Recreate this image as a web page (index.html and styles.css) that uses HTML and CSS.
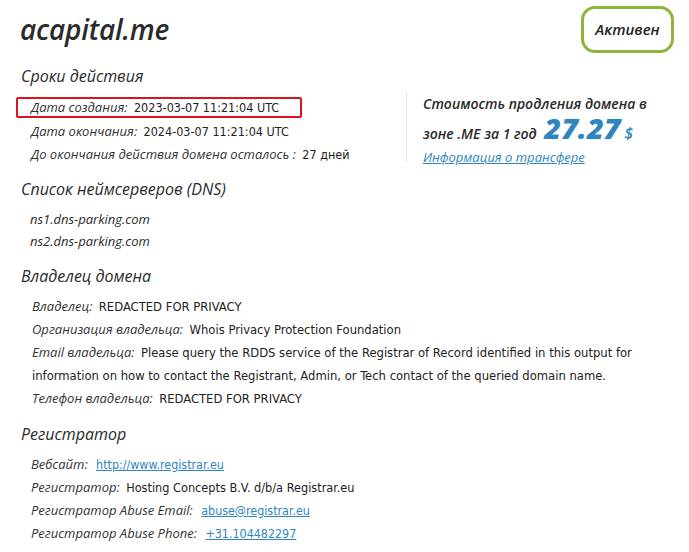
FILE: index.html
```html
<!DOCTYPE html>
<html lang="ru">
<head>
    <meta charset="UTF-8">
    <meta name="viewport" content="width=device-width, initial-scale=1.0">
    <title>acapital.me — Whois</title>
    <link rel="stylesheet" href="styles.css">
</head>
<body>
    <div id="whois">
        <div class="head">
            <h1 class="domain">acapital.me</h1>
            <div class="status">Активен</div>
        </div>

        <h2>Сроки действия</h2>
        <div class="terms">
            <div class="terms-list">
                <div class="row marked"><span class="lbl">Дата создания:</span> <span class="val">2023-03-07 11:21:04 UTC</span></div>
                <div class="row"><span class="lbl">Дата окончания:</span> <span class="val">2024-03-07 11:21:04 UTC</span></div>
                <div class="row"><span class="lbl">До окончания действия домена осталось :</span> <span class="val">27 дней</span></div>
            </div>
            <div class="price">
                <p>Стоимость продления домена в<br>зоне .ME за 1 год <span class="sum">27.27</span> <span class="cur">$</span></p>
                <a href="#">Информация о трансфере</a>
            </div>
        </div>

        <h2>Список неймсерверов (DNS)</h2>
        <div class="row ns">ns1.dns-parking.com</div>
        <div class="row ns">ns2.dns-parking.com</div>

        <h2>Владелец домена</h2>
        <div class="owner">
            <div class="row"><span class="lbl">Владелец:</span> <span class="val">REDACTED FOR PRIVACY</span></div>
            <div class="row"><span class="lbl">Организация владельца:</span> <span class="val">Whois Privacy Protection Foundation</span></div>
            <div class="row wrap"><span class="lbl">Email владельца:</span> <span class="val">Please query the RDDS service of the Registrar of Record identified in this output for information on how to contact the Registrant, Admin, or Tech contact of the queried domain name.</span></div>
            <div class="row"><span class="lbl">Телефон владельца:</span> <span class="val">REDACTED FOR PRIVACY</span></div>
        </div>

        <h2>Регистратор</h2>
        <div class="registrar">
            <div class="row"><span class="lbl">Вебсайт:</span> <a class="val" href="#">http://www.registrar.eu</a></div>
            <div class="row"><span class="lbl">Регистратор:</span> <span class="val">Hosting Concepts B.V. d/b/a Registrar.eu</span></div>
            <div class="row"><span class="lbl">Регистратор Abuse Email:</span> <a class="val" href="#">abuse@registrar.eu</a></div>
            <div class="row"><span class="lbl">Регистратор Abuse Phone:</span> <a class="val" href="#">+31.104482297</a></div>
        </div>
    </div>
</body>
</html>
```

FILE: styles.css
```css
body {
    margin: 0;
    background: #ffffff;
    color: #2a2a2a;
    font-family: "Open Sans", "Noto Sans", sans-serif;
}

#whois {
    padding: 0 15px 0 20px;
}

.head {
    display: flex;
    justify-content: space-between;
    align-items: flex-start;
    height: 52px;
}

.domain {
    margin: 11px 0 0 0;
    font-size: 28px;
    line-height: 36px;
    font-weight: 600;
    font-style: italic;
    letter-spacing: -0.2px;
    color: #2b2b2b;
}

.status {
    margin-top: 6px;
    width: 87px;
    height: 41px;
    line-height: 41px;
    text-align: center;
    border: 3px solid #8db53c;
    border-radius: 14px;
    font-style: italic;
    font-weight: 600;
    font-size: 15px;
    color: #222;
}

h2 {
    margin: 0 0 8px 0;
    padding: 13px 0 0 1px;
    line-height: 22px;
    font-size: 16px;
    font-weight: 500;
    font-style: italic;
    color: #2a2a2a;
}

.row {
    height: 23px;
    line-height: 23px;
    padding-left: 11px;
    font-size: 13px;
    white-space: nowrap;
}

.lbl {
    font-style: italic;
    color: #333;
    margin-right: 3px;
}

.val {
    font-family: "DejaVu Sans Condensed", "Liberation Sans", sans-serif;
    font-size: 12.5px;
    color: #222;
}

a, a.val {
    color: #2e86c1;
    text-decoration: underline;
}

/* сроки + блок цены справа */
.terms {
    display: flex;
    align-items: flex-start;
    height: 70px;
}

.terms-list {
    width: 386px;
    padding-top: 2px;
}

.marked {
    margin-left: -4px;
    padding-left: 13px;
    width: 269px;
    height: 17px;
    line-height: 17px;
    border: 2px solid #d9141e;
    border-radius: 2px;
    margin-bottom: 2px;
}

.price {
    margin-top: -3px;
    border-left: 1px solid #e6e6e6;
    padding: 0 0 0 16px;
    height: 70px;
    width: 240px;
}

.price p {
    margin: 0;
    font-style: italic;
    font-weight: 600;
    font-size: 14px;
    line-height: 24px;
    white-space: nowrap;
    color: #2a2a2a;
}

.sum {
    margin-left: 4px;
    font-size: 29px;
    font-weight: 800;
    line-height: 24px;
    color: #2e86c1;
}

.cur {
    font-size: 16px;
    color: #2e86c1;
}

.price a {
    display: block;
    font-style: italic;
    font-size: 13px;
    line-height: 22px;
}

.ns {
    font-style: italic;
    padding-left: 10px;
    height: 22px;
    line-height: 22px;
}

.owner .row {
    padding-left: 12px;
}

.owner .val {
    font-size: 12.9px;
}

.owner .wrap {
    white-space: normal;
    height: auto;
    width: 625px;
}

.registrar .val {
    font-size: 12.6px;
}

.registrar a.val {
    font-size: 12.4px;
    margin-left: 2px;
}
```
